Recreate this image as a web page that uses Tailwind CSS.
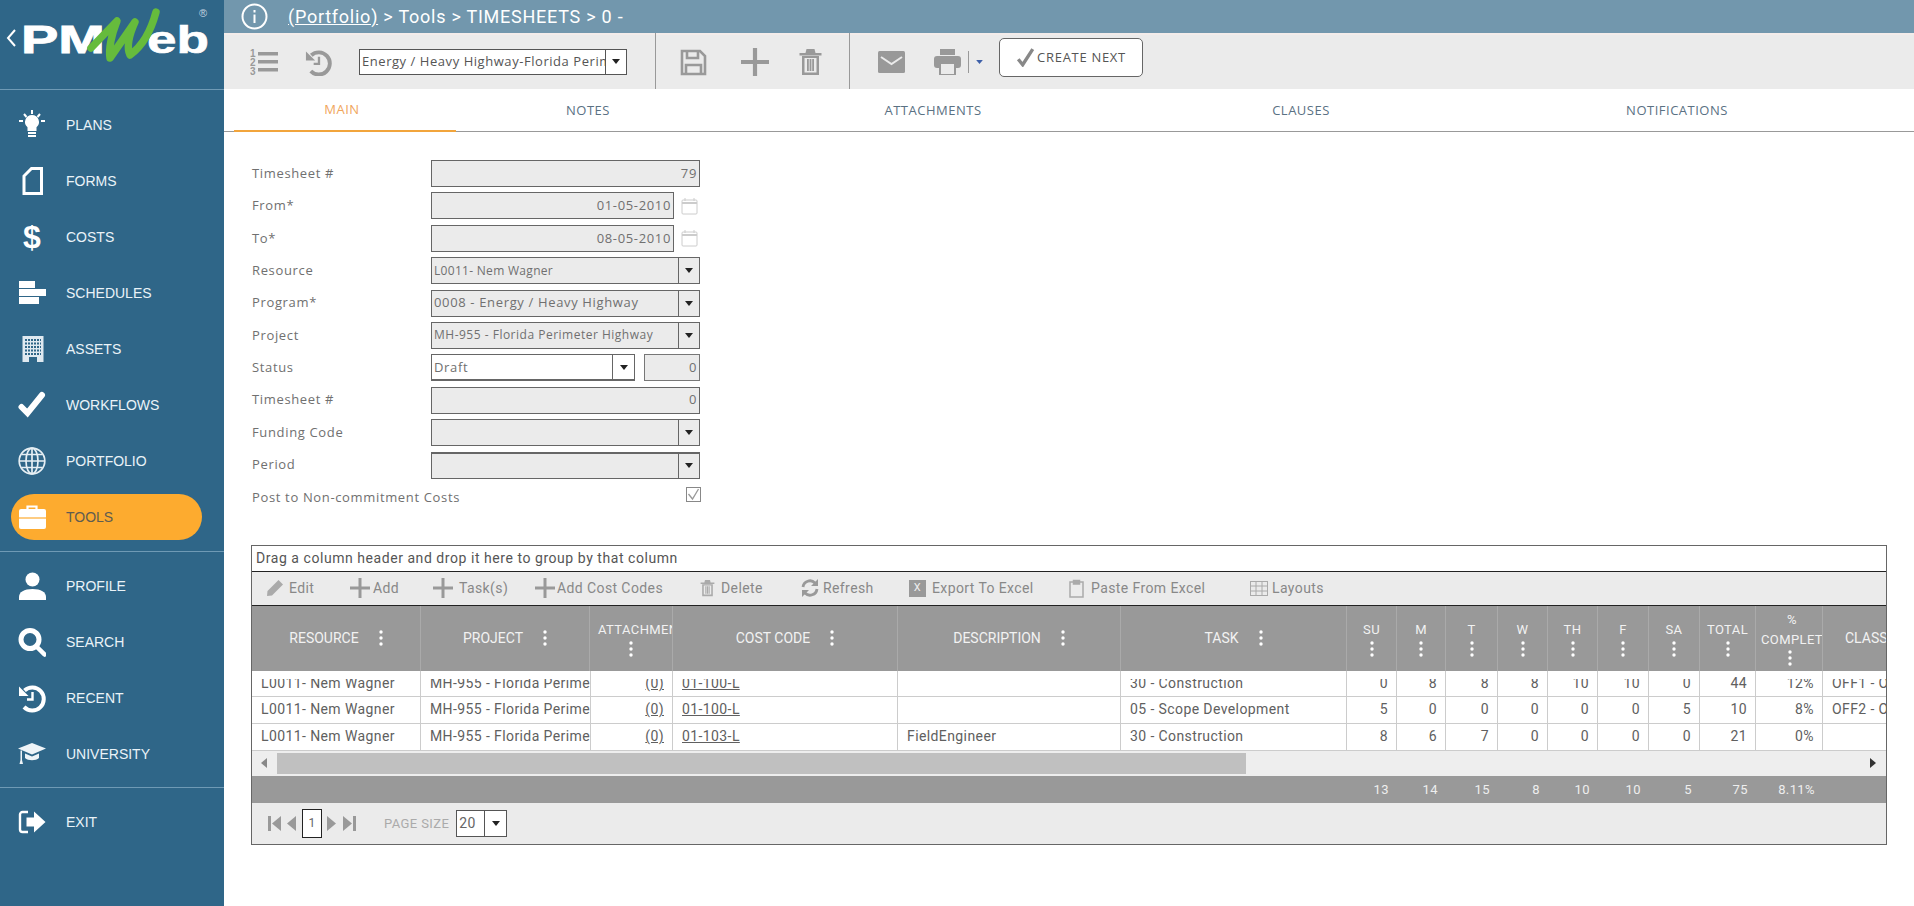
<!DOCTYPE html>
<html lang="en" class="w-full h-full">

  <head>
    <meta charset="UTF-8" />
    <meta name="viewport" content="width=device-width, initial-scale=1.0" />
    <script src="https://cdn.jsdelivr.net/npm/@tailwindcss/browser@4"></script>
    <title>PMWeb - Timesheets</title>
  </head>

  <body class="w-full h-full overflow-hidden bg-white flex font-['Open_Sans',sans-serif] text-[#707070]">
    <!-- shared glyphs -->
    <svg class="hidden">
      <symbol id="caret" viewBox="0 0 10 6"><path d="M0 0h10L5 6z" /></symbol>
      <symbol id="dots" viewBox="0 0 4 16">
        <circle cx="2" cy="2" r="1.7" /><circle cx="2" cy="8" r="1.7" /><circle cx="2" cy="14" r="1.7" />
      </symbol>
      <symbol id="plus" viewBox="0 0 20 20"><path d="M8.5 0h3v8.5H20v3h-8.5V20h-3v-8.5H0v-3h8.5z" /></symbol>
      <symbol id="trash" viewBox="0 0 24 28">
        <path d="M1 5h22v2.500H1zM8 1h8l1 4H7zM3.500 8h17v19h-17zM6 10v14.500h12V10z" fill-rule="evenodd" />
        <path d="M8.500 11h1.800v12H8.500zM11.100 11h1.800v12h-1.800zM13.700 11h1.800v12h-1.800z" />
      </symbol>
      <symbol id="history" viewBox="0 0 28 28">
        <path d="M6.500 6.500A11.500 11.500 0 1 1 6 23" fill="none" stroke="currentColor" stroke-width="4" />
        <path d="M1 2.500v9.500h9.500z" fill="currentColor" />
        <path d="M14.500 8v7.500H9" fill="none" stroke="currentColor" stroke-width="2.400" />
      </symbol>
    </svg>

    <aside class="w-[224px] h-full shrink-0 flex flex-col bg-[#2f6688] text-[#eaf3f8] text-[14px] font-['Liberation_Sans',sans-serif]">
      <div class="h-[90px] shrink-0 border-b border-[#6f9ab5]">
        <svg class="w-[224px] h-[90px]" viewBox="0 0 224 90">
          <path d="M15 30l-7 8 7 8" fill="none" stroke="#fff" stroke-width="2" />
          <text x="21" y="53" font-family="Liberation Sans" font-weight="700" font-size="38" fill="#fff" stroke="#fff" stroke-width="0.8" textLength="84" lengthAdjust="spacingAndGlyphs">PM</text>
          <text x="147" y="53" font-family="Liberation Sans" font-weight="700" font-size="38" fill="#fff" stroke="#fff" stroke-width="0.6" textLength="62" lengthAdjust="spacingAndGlyphs">eb</text>
          <path d="M91 48L117 21Q108 44 110 58L135 22Q125 44 130 55Q148 42 156 12" fill="none" stroke="#66bb3c" stroke-width="7.500" stroke-linejoin="round" stroke-linecap="round" />
          <text x="199" y="17" font-family="Liberation Sans" font-size="11" fill="#c5d5e0">®</text>
        </svg>
      </div>

      <nav class="pt-[7px] flex flex-col">
        <a class="h-[56px] flex items-center">
          <svg class="w-[28px] h-[30px] ml-[18px] mr-[20px]" viewBox="0 0 28 30" fill="#fff" stroke="#fff">
            <path d="M1 11h4M23 11h4M6 4l2.500 3M22 4l-2.500 3M14 0v4" fill="none" stroke-width="2" />
            <path d="M14 5a7 7 0 0 0-4.500 12.300V21h9v-3.700A7 7 0 0 0 14 5z" stroke="none" />
            <path d="M10 23h8M10 26h8" fill="none" stroke-width="2" />
          </svg>
          PLANS
        </a>
        <a class="h-[56px] flex items-center">
          <svg class="w-[28px] h-[30px] ml-[18px] mr-[20px]" viewBox="0 0 28 30" fill="none" stroke="#fff" stroke-width="3">
            <path d="M6 27.500V10L13.500 2.500h10v25z" />
          </svg>
          FORMS
        </a>
        <a class="h-[56px] flex items-center">
          <span class="w-[28px] ml-[18px] mr-[20px] text-center text-[32px] leading-none text-white font-bold">$</span>
          COSTS
        </a>
        <a class="h-[56px] flex items-center">
          <svg class="w-[28px] h-[24px] ml-[18px] mr-[20px]" viewBox="0 0 28 24" fill="#fff">
            <rect x="1" y="0" width="16" height="7" /><rect x="1" y="8" width="27" height="7" /><rect x="1" y="16" width="20" height="7" />
          </svg>
          SCHEDULES
        </a>
        <a class="h-[56px] flex items-center">
          <svg class="w-[28px] h-[30px] ml-[18px] mr-[20px]" viewBox="0 0 28 30">
            <rect x="4.500" y="2" width="21" height="26" fill="#dfe9f0" />
            <path d="M7 6h16M7 9.500h16M7 13h16M7 16.500h16M7 20h16" stroke="#2f6688" stroke-width="1.800" stroke-dasharray="2 1" />
            <path d="M11 28v-5h8v5z" fill="#2f6688" />
          </svg>
          ASSETS
        </a>
        <a class="h-[56px] flex items-center">
          <svg class="w-[28px] h-[28px] ml-[18px] mr-[20px]" viewBox="0 0 28 28" fill="none" stroke="#fff" stroke-width="6" stroke-linecap="round">
            <path d="M3.500 16l6 6L24 4" />
          </svg>
          WORKFLOWS
        </a>
        <a class="h-[56px] flex items-center">
          <svg class="w-[28px] h-[28px] ml-[18px] mr-[20px]" viewBox="0 0 28 28" fill="none" stroke="#e6eff4" stroke-width="1.700">
            <circle cx="14" cy="14" r="12.800" /><ellipse cx="14" cy="14" rx="6" ry="12.800" />
            <path d="M14 1v26M1.500 14h25M3.500 7.500h21M3.500 20.500h21" />
          </svg>
          PORTFOLIO
        </a>
        <a class="h-[56px] flex items-center relative text-[#5f5c50]">
          <span class="absolute left-[11px] right-[22px] top-[5px] bottom-[5px] rounded-full bg-[#fdab2f]"></span>
          <svg class="relative w-[28px] h-[26px] ml-[18px] mr-[20px]" viewBox="0 0 28 26">
            <path d="M9.500 6V2.500h9V6" fill="none" stroke="#fff" stroke-width="2.200" />
            <rect x="1" y="5" width="27" height="20" rx="2" fill="#fff" />
            <path d="M1 14h27" stroke="#fdab2f" stroke-width="1.200" />
          </svg>
          <span class="relative">TOOLS</span>
        </a>
        <div class="mt-[6px] mb-[6px] border-t border-[#6f9ab5]"></div>
        <a class="h-[56px] flex items-center">
          <svg class="w-[28px] h-[28px] ml-[18px] mr-[20px]" viewBox="0 0 28 28" fill="#fff">
            <circle cx="14.500" cy="7.500" r="7" /><path d="M1 28v-3c0-5 5-8 13.500-8S28 20 28 25v3z" />
          </svg>
          PROFILE
        </a>
        <a class="h-[56px] flex items-center">
          <svg class="w-[28px] h-[30px] ml-[18px] mr-[20px]" viewBox="0 0 28 30" fill="none" stroke="#fff">
            <circle cx="12" cy="12.500" r="9" stroke-width="5" /><path d="M19 20l7.500 7.500" stroke-width="4.500" stroke-linecap="round" />
          </svg>
          SEARCH
        </a>
        <a class="h-[56px] flex items-center">
          <svg class="w-[28px] h-[30px] ml-[18px] mr-[20px] text-white"><use href="#history" /></svg>
          RECENT
        </a>
        <a class="h-[56px] flex items-center">
          <svg class="w-[28px] h-[22px] ml-[18px] mr-[20px]" viewBox="0 0 28 22" fill="#eef4f8">
            <path d="M0 5.500L14 0l14 5.500-14 6z" /><path d="M7 10.500l7 3 7-3v4.500c-3 3-11 3-14 0z" /><path d="M2.500 7.500h1.500V17l1 4H1.500l1-4z" />
          </svg>
          UNIVERSITY
        </a>
        <div class="mt-[5px] mb-[6px] border-t border-[#6f9ab5]"></div>
        <a class="h-[56px] flex items-center">
          <svg class="w-[28px] h-[24px] ml-[18px] mr-[20px]" viewBox="0 0 28 24">
            <path d="M10 2H4.500A2.500 2.500 0 0 0 2 4.500v15A2.500 2.500 0 0 0 4.500 22H10" fill="none" stroke="#fff" stroke-width="2.400" />
            <path d="M8.500 7.500H16V1.500L27.500 12 16 22.500v-6H8.500z" fill="#fff" />
          </svg>
          EXIT
        </a>
      </nav>
    </aside>

    <main class="flex-1 min-w-0 flex flex-col">
      <div class="h-[33px] shrink-0 bg-[#7297ad] flex items-center text-white">
        <svg class="w-[27px] h-[27px] ml-[17px]" viewBox="0 0 27 27" fill="none" stroke="#fff">
          <circle cx="13.500" cy="13.500" r="12" stroke-width="2" />
          <path d="M13.500 11.500v8.500M13.500 7v2.500" stroke-width="2" />
        </svg>
        <p class="ml-[20px] text-[18px] font-['Roboto',sans-serif] tracking-[0.75px]"><span class="underline">(Portfolio)</span> &gt; Tools &gt; TIMESHEETS &gt; 0 -</p>
      </div>

      <div class="h-[56px] shrink-0 bg-[#ebebeb] border-t-[2px] border-[#f3ecea] flex items-center text-[#999]">
        <svg class="w-[28px] h-[27px] ml-[26px]" viewBox="0 0 28 27" fill="#999">
          <rect x="8" y="3" width="20" height="3.500" /><rect x="8" y="11" width="20" height="3.500" /><rect x="8" y="19" width="20" height="3.500" />
          <text x="0" y="8" font-size="10" font-weight="700" font-family="Liberation Sans">1</text><text x="0" y="17" font-size="10" font-weight="700" font-family="Liberation Sans">2</text><text x="0" y="26" font-size="10" font-weight="700" font-family="Liberation Sans">3</text>
        </svg>
        <svg class="w-[27px] h-[27px] ml-[27px] text-[#999]"><use href="#history" /></svg>
        <div class="w-[268px] h-[26px] -mt-[1px] ml-[27px] flex items-center bg-white border border-[#555] text-[#555] text-[13px] tracking-[0.55px]">
          <span class="flex-1 pl-[2px] overflow-hidden whitespace-nowrap">Energy / Heavy Highway-Florida Perimeter Highway</span>
          <span class="w-[21px] h-full border-l border-[#555] flex items-center justify-center"><svg class="w-[8px] h-[5px] fill-[#222]"><use href="#caret" /></svg></span>
        </div>
        <div class="w-px h-[56px] -mt-[2px] ml-[28px] bg-[#999]"></div>
        <svg class="w-[27px] h-[27px] ml-[24px]" viewBox="0 0 27 27" fill="none" stroke="#999" stroke-width="2.600">
          <path d="M2 2h18l5 5v18H2z" /><path d="M7 2v7h11V2M6 25v-9h15v9" />
        </svg>
        <svg class="w-[28px] h-[28px] ml-[34px] fill-[#999]"><use href="#plus" /></svg>
        <svg class="w-[25px] h-[28px] ml-[29px] fill-[#999]"><use href="#trash" /></svg>
        <div class="w-px h-[56px] -mt-[2px] ml-[26px] bg-[#999]"></div>
        <svg class="w-[27px] h-[22px] ml-[28px]" viewBox="0 0 27 22">
          <rect width="27" height="22" rx="1.500" fill="#999" /><path d="M3 6l10.500 7L24 6" fill="none" stroke="#ebebeb" stroke-width="2" />
        </svg>
        <svg class="w-[27px] h-[26px] ml-[29px]" viewBox="0 0 27 26" fill="#999">
          <rect x="6" y="0" width="15" height="6" /><rect x="0" y="7" width="27" height="12" rx="3" /><rect x="6" y="14" width="15" height="12" fill="#ebebeb" stroke="#999" stroke-width="2" />
        </svg>
        <div class="w-px h-[22px] ml-[7px] bg-[#999]"></div>
        <svg class="w-[7px] h-[4px] ml-[7px] fill-[#3d5fa8]"><use href="#caret" /></svg>
        <button class="w-[144px] h-[39px] -mt-[9px] ml-[16px] rounded-[5px] bg-white border border-[#666] flex items-center justify-center text-[13px] text-[#555] tracking-[0.7px]">
          <svg class="w-[19px] h-[19px] mr-[2px]" viewBox="0 0 17 17" fill="none" stroke="#888" stroke-width="3"><path d="M2 10l4 5L15 1" /></svg>
          CREATE NEXT
        </button>
      </div>

      <div class="h-[43px] shrink-0 border-b border-[#999] flex pl-[10px] text-[13px] tracking-[0.5px] text-[#5a7183]">
        <a class="w-[222px] h-[43px] flex items-center justify-center pr-[6px] pt-[1px] border-b-[2px] border-[#f2a53c] text-[#f0a65c]">MAIN</a>
        <a class="w-[264px] flex items-center justify-center pt-[1px]">NOTES</a>
        <a class="w-[426px] flex items-center justify-center pt-[1px]">ATTACHMENTS</a>
        <a class="w-[310px] flex items-center justify-center pt-[1px]">CLAUSES</a>
        <a class="w-[442px] flex items-center justify-center pt-[1px]">NOTIFICATIONS</a>
      </div>

      <form class="pt-[28px] pl-[28px] flex flex-col gap-[5.4px] text-[13px] tracking-[0.65px]">
        <div class="flex h-[27px] items-center"><label class="w-[179px]">Timesheet #</label>
          <div class="w-[269px] h-full bg-[#ebebeb] border border-[#666] flex items-center justify-end pr-[2px]">79</div>
        </div>
        <div class="flex h-[27px] items-center"><label class="w-[179px]">From*</label>
          <div class="w-[243px] h-full bg-[#ebebeb] border border-[#666] flex items-center justify-end pr-[2px]">01-05-2010</div>
          <svg class="w-[17px] h-[18px] ml-[7px]" viewBox="0 0 17 18" fill="none" stroke="#ccc"><rect x="1" y="3" width="15" height="14" rx="1" /><path d="M1 6h15" stroke-width="2" /><path d="M4 1v3M13 1v3" /></svg>
        </div>
        <div class="flex h-[27px] items-center"><label class="w-[179px]">To*</label>
          <div class="w-[243px] h-full bg-[#ebebeb] border border-[#666] flex items-center justify-end pr-[2px]">08-05-2010</div>
          <svg class="w-[17px] h-[18px] ml-[7px]" viewBox="0 0 17 18" fill="none" stroke="#ccc"><rect x="1" y="3" width="15" height="14" rx="1" /><path d="M1 6h15" stroke-width="2" /><path d="M4 1v3M13 1v3" /></svg>
        </div>
        <div class="flex h-[27px] items-center"><label class="w-[179px]">Resource</label>
          <div class="w-[269px] h-full bg-[#ebebeb] border border-[#666] flex items-center text-[12px] tracking-[0.3px]">
            <span class="flex-1 pl-[2px]">L0011- Nem Wagner</span>
            <span class="w-[21px] h-full border-l border-[#666] flex items-center justify-center"><svg class="w-[8px] h-[5px] fill-[#222]"><use href="#caret" /></svg></span>
          </div>
        </div>
        <div class="flex h-[27px] items-center"><label class="w-[179px]">Program*</label>
          <div class="w-[269px] h-full bg-[#ebebeb] border border-[#666] flex items-center">
            <span class="flex-1 pl-[2px]">0008 - Energy / Heavy Highway</span>
            <span class="w-[21px] h-full border-l border-[#666] flex items-center justify-center"><svg class="w-[8px] h-[5px] fill-[#222]"><use href="#caret" /></svg></span>
          </div>
        </div>
        <div class="flex h-[27px] items-center"><label class="w-[179px]">Project</label>
          <div class="w-[269px] h-full bg-[#ebebeb] border border-[#666] flex items-center text-[12px] tracking-[0.5px]">
            <span class="flex-1 pl-[2px]">MH-955 - Florida Perimeter Highway</span>
            <span class="w-[21px] h-full border-l border-[#666] flex items-center justify-center"><svg class="w-[8px] h-[5px] fill-[#222]"><use href="#caret" /></svg></span>
          </div>
        </div>
        <div class="flex h-[27px] items-center"><label class="w-[179px]">Status</label>
          <div class="w-[204px] h-full bg-white border border-b-2 border-[#666] flex items-center">
            <span class="flex-1 pl-[2px]">Draft</span>
            <span class="w-[22px] h-full border-l border-[#666] flex items-center justify-center"><svg class="w-[8px] h-[5px] fill-[#222]"><use href="#caret" /></svg></span>
          </div>
          <div class="w-[56px] h-full ml-[9px] bg-[#ebebeb] border border-[#777] flex items-center justify-end pr-[2px]">0</div>
        </div>
        <div class="flex h-[27px] items-center"><label class="w-[179px]">Timesheet #</label>
          <div class="w-[269px] h-full bg-[#ebebeb] border border-[#666] flex items-center justify-end pr-[2px]">0</div>
        </div>
        <div class="flex h-[27px] items-center"><label class="w-[179px]">Funding Code</label>
          <div class="w-[269px] h-full bg-[#ebebeb] border border-[#666] flex items-center justify-end">
            <span class="w-[21px] h-full border-l border-[#666] flex items-center justify-center"><svg class="w-[8px] h-[5px] fill-[#222]"><use href="#caret" /></svg></span>
          </div>
        </div>
        <div class="flex h-[27px] items-center"><label class="w-[179px]">Period</label>
          <div class="w-[269px] h-full bg-[#ebebeb] border border-t-2 border-[#666] flex items-center justify-end">
            <span class="w-[21px] h-full border-l border-[#666] flex items-center justify-center"><svg class="w-[8px] h-[5px] fill-[#222]"><use href="#caret" /></svg></span>
          </div>
        </div>
        <div class="flex h-[27px] items-center"><label class="w-[434px]">Post to Non-commitment Costs</label>
          <svg class="w-[15px] h-[15px] -mt-[5px]" viewBox="0 0 15 15" fill="none" stroke="#888"><rect x="0.500" y="0.500" width="14" height="14" /><path d="M2.500 7l4 5 6-10" stroke="#999" stroke-width="1.300" /></svg>
        </div>
      </form>

      <section class="mt-[34px] ml-[27px] w-[1636px] border border-[#666] bg-[#ebebeb] flex flex-col font-['Roboto',sans-serif] text-[14px] tracking-[0.4px] overflow-hidden">
        <div class="h-[26px] bg-white border-b border-[#222] flex items-center pl-[4px] text-[#555] tracking-[0.55px]">Drag a column header and drop it here to group by that column</div>

        <div class="h-[34px] border-b border-[#222] flex items-center pl-[14px] text-[#888]">
          <span class="w-[84px] flex items-center gap-[5px]"><svg class="w-[18px] h-[18px]" viewBox="0 0 18 18" fill="#aaa"><path d="M12.500 1l4.500 4.500L6 16.500 1 17l.500-5z" /></svg>Edit</span>
          <span class="w-[83px] flex items-center gap-[3px]"><svg class="w-[20px] h-[20px] fill-[#999]"><use href="#plus" /></svg>Add</span>
          <span class="w-[102px] flex items-center gap-[6px]"><svg class="w-[20px] h-[20px] fill-[#999]"><use href="#plus" /></svg>Task(s)</span>
          <span class="w-[165px] flex items-center gap-[2px]"><svg class="w-[20px] h-[20px] fill-[#999]"><use href="#plus" /></svg>Add Cost Codes</span>
          <span class="w-[101px] flex items-center gap-[6px]"><svg class="w-[15px] h-[18px] fill-[#aaa]"><use href="#trash" /></svg>Delete</span>
          <span class="w-[108px] flex items-center gap-[4px]"><svg class="w-[18px] h-[18px]" viewBox="0 0 18 18" fill="none" stroke="#999" stroke-width="2.800"><path d="M2 8a7 7 0 0 1 12-4M16 10a7 7 0 0 1-12 4" /><path d="M17 0v7h-7zM1 18v-7h7z" fill="#999" stroke="none" /></svg>Refresh</span>
          <span class="w-[160px] flex items-center gap-[6px]"><span class="w-[17px] h-[17px] bg-[#999] text-[#eee] text-[11px] flex items-center justify-center">X</span>Export To Excel</span>
          <span class="w-[181px] flex items-center gap-[7px]"><svg class="w-[15px] h-[19px]" viewBox="0 0 15 19" fill="none" stroke="#aaa" stroke-width="1.500"><rect x="1" y="3" width="13" height="15" /><path d="M4.500 1.500h6V5h-6z" fill="#aaa" /></svg>Paste From Excel</span>
          <span class="flex items-center gap-[4px]"><svg class="w-[18px] h-[15px]" viewBox="0 0 18 15" fill="none" stroke="#aaa"><rect x="0.500" y="0.500" width="17" height="14" /><path d="M0 5h18M0 10h18M6 0v15M12 0v15" /></svg>Layouts</span>
        </div>

        <!-- column widths: resource project attachments code description task su m t w th f sa total % class -->
        <div class="grid w-[1700px] grid-cols-[169px_169px_83px_225px_223px_226px_50px_49px_52px_50px_50px_51px_51px_56px_67px_79px] grid-rows-[65px_26px_27px_27px] bg-white text-[#606060] [&>div]:border-r [&>div]:border-[#ccc] [&>div]:flex [&>div]:items-center [&>div]:overflow-hidden [&>div]:whitespace-nowrap">
          <!-- header -->
          <div class="!border-[#aaa] bg-[#999] text-[#f2f2f2] tracking-[0px] justify-center gap-[20px]">RESOURCE <svg class="w-[4px] h-[16px] fill-white"><use href="#dots" /></svg></div>
          <div class="!border-[#aaa] bg-[#999] text-[#f2f2f2] tracking-[0px] justify-center gap-[20px]">PROJECT <svg class="w-[4px] h-[16px] fill-white"><use href="#dots" /></svg></div>
          <div class="!border-[#aaa] bg-[#999] text-[#f2f2f2] text-[13px] flex-col justify-center pl-[8px] !items-start gap-[2px]">ATTACHMENTS <svg class="w-[4px] h-[16px] ml-[31px] fill-white"><use href="#dots" /></svg></div>
          <div class="!border-[#aaa] bg-[#999] text-[#f2f2f2] tracking-[0px] justify-center gap-[20px]">COST CODE <svg class="w-[4px] h-[16px] fill-white"><use href="#dots" /></svg></div>
          <div class="!border-[#aaa] bg-[#999] text-[#f2f2f2] tracking-[0px] justify-center gap-[20px]">DESCRIPTION <svg class="w-[4px] h-[16px] fill-white"><use href="#dots" /></svg></div>
          <div class="!border-[#aaa] bg-[#999] text-[#f2f2f2] tracking-[0px] justify-center gap-[20px]">TASK <svg class="w-[4px] h-[16px] fill-white"><use href="#dots" /></svg></div>
          <div class="!border-[#aaa] bg-[#999] text-[#f2f2f2] text-[13px] flex-col justify-center gap-[2px]">SU <svg class="w-[4px] h-[16px] fill-white"><use href="#dots" /></svg></div>
          <div class="!border-[#aaa] bg-[#999] text-[#f2f2f2] text-[13px] flex-col justify-center gap-[2px]">M <svg class="w-[4px] h-[16px] fill-white"><use href="#dots" /></svg></div>
          <div class="!border-[#aaa] bg-[#999] text-[#f2f2f2] text-[13px] flex-col justify-center gap-[2px]">T <svg class="w-[4px] h-[16px] fill-white"><use href="#dots" /></svg></div>
          <div class="!border-[#aaa] bg-[#999] text-[#f2f2f2] text-[13px] flex-col justify-center gap-[2px]">W <svg class="w-[4px] h-[16px] fill-white"><use href="#dots" /></svg></div>
          <div class="!border-[#aaa] bg-[#999] text-[#f2f2f2] text-[13px] flex-col justify-center gap-[2px]">TH <svg class="w-[4px] h-[16px] fill-white"><use href="#dots" /></svg></div>
          <div class="!border-[#aaa] bg-[#999] text-[#f2f2f2] text-[13px] flex-col justify-center gap-[2px]">F <svg class="w-[4px] h-[16px] fill-white"><use href="#dots" /></svg></div>
          <div class="!border-[#aaa] bg-[#999] text-[#f2f2f2] text-[13px] flex-col justify-center gap-[2px]">SA <svg class="w-[4px] h-[16px] fill-white"><use href="#dots" /></svg></div>
          <div class="!border-[#aaa] bg-[#999] text-[#f2f2f2] text-[13px] flex-col justify-center gap-[2px]">TOTAL <svg class="w-[4px] h-[16px] fill-white"><use href="#dots" /></svg></div>
          <div class="!border-[#aaa] bg-[#999] text-[#f2f2f2] text-[13px] flex-col justify-center gap-[1px] pl-[5px] !items-start leading-[19px]"><span class="ml-[26px]">%</span>COMPLETE <svg class="w-[4px] h-[16px] ml-[27px] fill-white"><use href="#dots" /></svg></div>
          <div class="!border-0 bg-[#999] text-[#f2f2f2] tracking-[0px] pl-[22px]">CLASS</div>

          <!-- rows: first one sits under the header edge, tops of the glyphs are cut -->
          <div class="border-b pl-[9px]"><span class="[clip-path:inset(6px_0_0_0)]">L0011- Nem Wagner</span></div>
          <div class="border-b pl-[9px] !border-r-0"><span class="[clip-path:inset(6px_0_0_0)]">MH-955 - Florida Perime</span></div>
          <div class="border-b border-l justify-end pr-[8px]"><u class="[clip-path:inset(6px_0_0_0)]">(0)</u></div>
          <div class="border-b pl-[9px]"><u class="[clip-path:inset(6px_0_0_0)]">01-100-L</u></div>
          <div class="border-b"></div>
          <div class="border-b pl-[9px]"><span class="[clip-path:inset(6px_0_0_0)]">30 - Construction</span></div>
          <div class="border-b justify-end pr-[8px]"><span class="[clip-path:inset(6px_0_0_0)]">0</span></div>
          <div class="border-b justify-end pr-[8px]"><span class="[clip-path:inset(6px_0_0_0)]">8</span></div>
          <div class="border-b justify-end pr-[8px]"><span class="[clip-path:inset(6px_0_0_0)]">8</span></div>
          <div class="border-b justify-end pr-[8px]"><span class="[clip-path:inset(6px_0_0_0)]">8</span></div>
          <div class="border-b justify-end pr-[8px]"><span class="[clip-path:inset(6px_0_0_0)]">10</span></div>
          <div class="border-b justify-end pr-[8px]"><span class="[clip-path:inset(6px_0_0_0)]">10</span></div>
          <div class="border-b justify-end pr-[8px]"><span class="[clip-path:inset(6px_0_0_0)]">0</span></div>
          <div class="border-b justify-end pr-[8px]">44</div>
          <div class="border-b justify-end pr-[8px]"><span class="[clip-path:inset(6px_0_0_0)]">12%</span></div>
          <div class="border-b pl-[9px] !border-r-0"><span class="[clip-path:inset(6px_0_0_0)]">OFF1 - OFFICE</span></div>

          <div class="border-b pl-[9px]">L0011- Nem Wagner</div>
          <div class="border-b pl-[9px] !border-r-0">MH-955 - Florida Perime</div>
          <div class="border-b border-l justify-end pr-[8px]"><u>(0)</u></div>
          <div class="border-b pl-[9px]"><u>01-100-L</u></div>
          <div class="border-b"></div>
          <div class="border-b pl-[9px]">05 - Scope Development</div>
          <div class="border-b justify-end pr-[8px]">5</div>
          <div class="border-b justify-end pr-[8px]">0</div>
          <div class="border-b justify-end pr-[8px]">0</div>
          <div class="border-b justify-end pr-[8px]">0</div>
          <div class="border-b justify-end pr-[8px]">0</div>
          <div class="border-b justify-end pr-[8px]">0</div>
          <div class="border-b justify-end pr-[8px]">5</div>
          <div class="border-b justify-end pr-[8px]">10</div>
          <div class="border-b justify-end pr-[8px]">8%</div>
          <div class="border-b pl-[9px] !border-r-0">OFF2 - OFFICE</div>

          <div class="border-b pl-[9px]">L0011- Nem Wagner</div>
          <div class="border-b pl-[9px] !border-r-0">MH-955 - Florida Perime</div>
          <div class="border-b border-l justify-end pr-[8px]"><u>(0)</u></div>
          <div class="border-b pl-[9px]"><u>01-103-L</u></div>
          <div class="border-b pl-[9px]">FieldEngineer</div>
          <div class="border-b pl-[9px]">30 - Construction</div>
          <div class="border-b justify-end pr-[8px]">8</div>
          <div class="border-b justify-end pr-[8px]">6</div>
          <div class="border-b justify-end pr-[8px]">7</div>
          <div class="border-b justify-end pr-[8px]">0</div>
          <div class="border-b justify-end pr-[8px]">0</div>
          <div class="border-b justify-end pr-[8px]">0</div>
          <div class="border-b justify-end pr-[8px]">0</div>
          <div class="border-b justify-end pr-[8px]">21</div>
          <div class="border-b justify-end pr-[8px]">0%</div>
          <div class="border-b !border-r-0"></div>
        </div>

        <div class="h-[25px] bg-[#eee] flex items-center">
          <svg class="w-[6px] h-[10px] ml-[9px] fill-[#888]" viewBox="0 0 6 10"><path d="M6 0v10L0 5z" /></svg>
          <span class="w-[969px] h-[21px] ml-[10px] bg-[#c0c0c0]"></span>
          <svg class="w-[6px] h-[10px] ml-auto mr-[10px] fill-[#333]" viewBox="0 0 6 10"><path d="M0 0v10l6-5z" /></svg>
        </div>

        <div class="grid w-[1700px] h-[27px] grid-cols-[169px_169px_83px_225px_223px_226px_50px_49px_52px_50px_50px_51px_51px_56px_67px_79px] bg-[#999] text-[#eee] text-[13px] items-center text-right [&>span]:pr-[8px]">
          <span></span><span></span><span></span><span></span><span></span><span></span>
          <span>13</span><span>14</span><span>15</span><span>8</span><span>10</span><span>10</span><span>5</span><span>75</span><span>8.11%</span><span></span>
        </div>

        <div class="h-[41px] flex items-center text-[#999]">
          <svg class="w-[13px] h-[15px] ml-[16px]" viewBox="0 0 13 15" fill="#999"><rect width="3" height="15" /><path d="M13 0v15L4 7.500z" /></svg>
          <svg class="w-[9px] h-[15px] ml-[6px]" viewBox="0 0 9 15" fill="#999"><path d="M9 0v15L0 7.500z" /></svg>
          <span class="w-[20px] h-[29px] ml-[6px] bg-white border border-[#222] flex items-center justify-center text-[#666] text-[12px]">1</span>
          <svg class="w-[9px] h-[15px] ml-[5px]" viewBox="0 0 9 15" fill="#999"><path d="M0 0v15l9-7.500z" /></svg>
          <svg class="w-[13px] h-[15px] ml-[7px]" viewBox="0 0 13 15" fill="#999"><rect x="10" width="3" height="15" /><path d="M0 0v15l9-7.500z" /></svg>
          <span class="ml-[28px] text-[13px] text-[#aaa]">PAGE SIZE</span>
          <div class="w-[51px] h-[27px] ml-[7px] bg-white border border-[#555] flex items-center text-[#666]">
            <span class="flex-1 pl-[2px]">20</span>
            <span class="w-[22px] h-full border-l border-[#555] flex items-center justify-center"><svg class="w-[8px] h-[5px] fill-[#222]"><use href="#caret" /></svg></span>
          </div>
        </div>
      </section>
    </main>
  </body>

</html>
